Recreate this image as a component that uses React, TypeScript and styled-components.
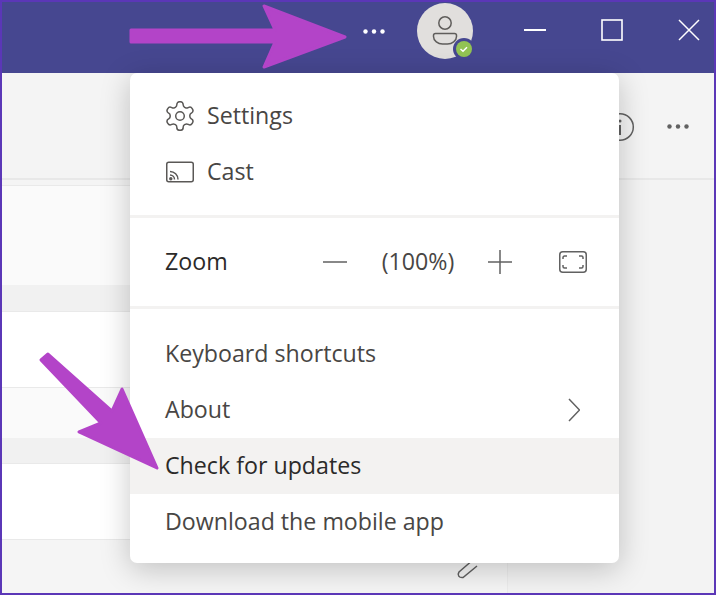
import React from 'react';
import styled, { createGlobalStyle } from 'styled-components';

const GlobalStyle = createGlobalStyle`
  html, body { margin: 0; padding: 0; background: #f3f3f3; }
  * { box-sizing: border-box; }
`;

const Window = styled.div`
  position: relative;
  width: 716px;
  height: 595px;
  overflow: hidden;
  border: 2px solid #5b37b7;
  background: #f3f3f3;
  font-family: "Open Sans", "Noto Sans", sans-serif;
  display: flex;
  flex-direction: column;
`;

const TitleBar = styled.header`
  flex: 0 0 71px;
  background: #464790;
  display: flex;
  align-items: flex-start;
  justify-content: flex-end;
  padding: 0 13px 0 0;
`;

const TitleIcon = styled.svg<{ $gap: number; $top: number }>`
  display: block;
  flex: none;
  margin-left: ${p => p.$gap}px;
  margin-top: ${p => p.$top}px;
`;

const SubHeader = styled.div`
  flex: 0 0 107px;
  background: #f4f4f4;
  border-bottom: 2px solid #e8e8e8;
  display: flex;
  align-items: center;
  justify-content: flex-end;
  gap: 32px;
  padding: 2px 25px 0 0;
`;

const Content = styled.div`
  flex: 1;
  display: flex;
  min-height: 0;
`;

const ListPane = styled.div`
  width: 506px;
  display: flex;
  flex-direction: column;
  border-right: 1px solid #ececec;
`;

const Band = styled.div<{ $h: number; $bg: string; $line?: boolean }>`
  flex: 0 0 ${p => p.$h}px;
  background: ${p => p.$bg};
  border-bottom: ${p => (p.$line ? '1px solid #e9e9e9' : 'none')};
`;

const ClipBand = styled(Band)`
  flex: 1;
  display: flex;
  justify-content: flex-end;
  padding: 15px 29px 0 0;
`;

const SidePane = styled.div`
  flex: 1;
  background: #f3f3f3;
`;

const Menu = styled.div`
  position: absolute;
  left: 128px;
  top: 71px;
  width: 489px;
  height: 490px;
  background: #ffffff;
  border-radius: 7px;
  box-shadow: 0 6px 30px rgba(0, 0, 0, 0.22);
  display: flex;
  flex-direction: column;
  overflow: hidden;
`;

const Section = styled.div<{ $top: number }>`
  padding-top: ${p => p.$top}px;
`;

const Divider = styled.div`
  height: 3px;
  background: #f3f2f1;
`;

const Row = styled.div<{ $active?: boolean; $h?: number; $strong?: boolean }>`
  height: ${p => p.$h ?? 56}px;
  padding: 0 35px;
  display: flex;
  align-items: center;
  background: ${p => (p.$active ? '#f3f2f1' : 'transparent')};
  color: ${p => (p.$active || p.$strong ? '#2b2a29' : '#484644')};
  font-size: 23.2px;
  line-height: 1;
`;

const RowIcon = styled.svg`
  display: block;
  flex: none;
  margin-right: 12px;
`;

const Spacer = styled.span`
  flex: 1;
`;

const ZoomControls = styled.div`
  display: flex;
  align-items: center;
  margin-right: -3px;
  color: #484644;
`;

const ZoomValue = styled.span`
  width: 74px;
  margin: 0 33px 0 34px;
  text-align: center;
  white-space: nowrap;
`;

const FitIcon = styled.svg`
  display: block;
  margin-left: 47px;
`;

const Chevron = styled.svg`
  display: block;
  margin-right: 4px;
`;

const Arrows = styled.svg`
  position: absolute;
  left: -2px;
  top: -2px;
  pointer-events: none;
`;

const Dots = ({ fill, r }: { fill: string; r: number }) => (
  <>
    <circle cx="2.5" cy="2.5" r={r} fill={fill} />
    <circle cx="11" cy="2.5" r={r} fill={fill} />
    <circle cx="19.5" cy="2.5" r={r} fill={fill} />
  </>
);

export default function App() {
  return (
    <>
      <GlobalStyle />
      <Window>
        <TitleBar>
          <TitleIcon $gap={0} $top={27} width="22" height="5" viewBox="0 0 22 5">
            <Dots fill="#ffffff" r={2.2} />
          </TitleIcon>
          <TitleIcon $gap={30} $top={0} width="60" height="60" viewBox="0 0 60 60">
            <circle cx="30" cy="29" r="28" fill="#e1dfdd" />
            <circle cx="30" cy="21" r="6.2" fill="none" stroke="#5f5d5b" strokeWidth="1.5" />
            <path d="M20.500 31.500h19a2 2 0 0 1 2 2v1c0 4.500-4.500 7.500-9 7.500h-5c-4.500 0-9-3-9-7.500v-1a2 2 0 0 1 2-2z" fill="none" stroke="#5f5d5b" strokeWidth="1.500" />
            <circle cx="49" cy="47" r="11" fill="#464790" />
            <circle cx="49" cy="47" r="8" fill="#92c353" />
            <path d="M45.500 47l2.500 2.300 4-4" fill="none" stroke="#ffffff" strokeWidth="1.500" />
          </TitleIcon>
          <TitleIcon $gap={48} $top={16} width="24" height="24" viewBox="0 0 24 24">
            <path d="M1 12h22" stroke="#ffffff" strokeWidth="2" />
          </TitleIcon>
          <TitleIcon $gap={53} $top={16} width="24" height="24" viewBox="0 0 24 24">
            <rect x="2" y="2" width="20" height="20" fill="none" stroke="#ffffff" strokeWidth="1.600" />
          </TitleIcon>
          <TitleIcon $gap={53} $top={16} width="24" height="24" viewBox="0 0 24 24">
            <path d="M2 2l20 20M22 2L2 22" stroke="#ffffff" strokeWidth="1.500" />
          </TitleIcon>
        </TitleBar>

        <SubHeader>
          <svg width="30" height="30" viewBox="0 0 30 30">
            <circle cx="15" cy="15" r="13.300" fill="none" stroke="#616161" strokeWidth="1.500" />
            <circle cx="15" cy="9" r="1.500" fill="#616161" />
            <path d="M15 13v10" stroke="#616161" strokeWidth="2" />
          </svg>
          <svg width="22" height="5" viewBox="0 0 22 5">
            <Dots fill="#616161" r={2.200} />
          </svg>
        </SubHeader>

        <Content>
          <ListPane>
            <Band $h={6} $bg="#f4f4f4" $line />
            <Band $h={99} $bg="#fafafa" />
            <Band $h={27} $bg="#f1f1f1" $line />
            <Band $h={76} $bg="#ffffff" $line />
            <Band $h={50} $bg="#fafafa" />
            <Band $h={26} $bg="#f1f1f1" $line />
            <Band $h={76} $bg="#ffffff" $line />
            <ClipBand $h={54} $bg="#f5f5f5">
              <svg width="22" height="26" viewBox="0 0 22 26">
                <path d="M18 4L3 17C1 20 3 23 7 22.500L21 11" fill="none" stroke="#616161" strokeWidth="1.500" />
              </svg>
            </ClipBand>
          </ListPane>
          <SidePane />
        </Content>

        <Menu>
          <Section $top={15}>
            <Row>
              <RowIcon width="30" height="30" viewBox="1.500 1.500 21 21" fill="none" stroke="#5a5856" strokeWidth="1.050" strokeLinejoin="round">
                <path d="M12.220 2h-.440a2 2 0 0 0-2 2v.180a2 2 0 0 1-1 1.730l-.430.250a2 2 0 0 1-2 0l-.150-.080a2 2 0 0 0-2.730.730l-.220.380a2 2 0 0 0 .730 2.730l.150.100a2 2 0 0 1 1 1.720v.510a2 2 0 0 1-1 1.740l-.150.090a2 2 0 0 0-.730 2.730l.220.380a2 2 0 0 0 2.730.730l.150-.080a2 2 0 0 1 2 0l.430.250a2 2 0 0 1 1 1.730V20a2 2 0 0 0 2 2h.440a2 2 0 0 0 2-2v-.180a2 2 0 0 1 1-1.730l.430-.250a2 2 0 0 1 2 0l.150.080a2 2 0 0 0 2.730-.730l.220-.390a2 2 0 0 0-.730-2.730l-.150-.080a2 2 0 0 1-1-1.740v-.500a2 2 0 0 1 1-1.740l.150-.090a2 2 0 0 0 .730-2.730l-.220-.380a2 2 0 0 0-2.730-.730l-.150.080a2 2 0 0 1-2 0l-.430-.250a2 2 0 0 1-1-1.730V4a2 2 0 0 0-2-2z" />
                <circle cx="12" cy="12" r="3" />
              </RowIcon>
              Settings
            </Row>
            <Row>
              <RowIcon width="30" height="24" viewBox="0 0 30 24" fill="none" stroke="#5a5856" strokeWidth="1.500">
                <rect x="1.750" y="2.250" width="26.500" height="19.500" rx="2" />
                <path d="M5 11.500a8 8 0 0 1 8 8M5 15a4.500 4.500 0 0 1 4.500 4.500" />
                <circle cx="5.800" cy="18.700" r="1" fill="#5a5856" />
              </RowIcon>
              Cast
            </Row>
          </Section>
          <Section $top={15}>
            <Divider />
          </Section>
          <Row $h={88} $strong>
            Zoom
            <Spacer />
            <ZoomControls>
              <svg width="24" height="24" viewBox="0 0 24 24">
                <path d="M0 12h24" stroke="#616161" strokeWidth="1.500" />
              </svg>
              <ZoomValue>(100%)</ZoomValue>
              <svg width="24" height="24" viewBox="0 0 24 24">
                <path d="M0 12h24M12 0v24" stroke="#616161" strokeWidth="1.500" />
              </svg>
              <FitIcon width="28" height="22" viewBox="0 0 28 22" fill="none" stroke="#616161" strokeWidth="1.500">
                <rect x="0.750" y="0.750" width="26.500" height="20.500" rx="3" />
                <path d="M4 8V6.500A1.500 1.500 0 0 1 5.500 5H8M20 5h2.500A1.500 1.500 0 0 1 24 6.500V8M24 14v1.500a1.500 1.500 0 0 1-1.500 1.500H20M8 17H5.500A1.500 1.500 0 0 1 4 15.500V14" />
              </FitIcon>
            </ZoomControls>
          </Row>
          <Divider />
          <Section $top={17}>
            <Row>Keyboard shortcuts</Row>
            <Row>
              About
              <Spacer />
              <Chevron width="12" height="24" viewBox="0 0 12 24">
                <path d="M1 1l10.500 11L1 23" fill="none" stroke="#616161" strokeWidth="1.500" />
              </Chevron>
            </Row>
            <Row $active>Check for updates</Row>
            <Row>Download the mobile app</Row>
          </Section>
        </Menu>

        <Arrows width="716" height="595" viewBox="0 0 716 595" fill="#b344c8" stroke="#b344c8" strokeWidth="3" strokeLinejoin="round">
          <polygon points="131,30 275,30 264,6 345,37 264,67 275,42 131,42" />
          <polygon points="48,354 41,360 101,423 79,432 157,468 122,389 112,411" />
        </Arrows>
      </Window>
    </>
  );
}
